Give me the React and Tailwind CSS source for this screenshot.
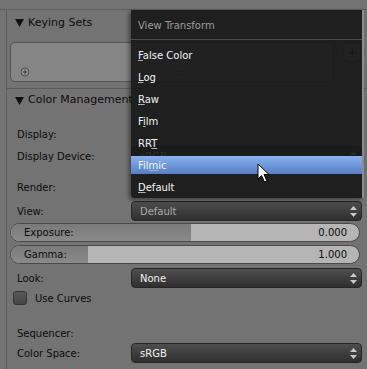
import React from 'react';

const font = { fontFamily: '"DejaVu Sans", "Liberation Sans", sans-serif' };

function Tri() {
  return (
    <svg width="9" height="8" viewBox="0 0 9 8" className="shrink-0">
      <path d="M0 0 H9 L4.5 8 Z" fill="#111" />
    </svg>
  );
}

function UpDown({ color = '#c8c8c8' }) {
  return (
    <svg width="7" height="11" viewBox="0 0 7 11" className="shrink-0">
      <path d="M3.5 0 L7 4 H0 Z" fill={color} />
      <path d="M0 7 H7 L3.5 11 Z" fill={color} />
    </svg>
  );
}

function Dropdown({ value, dim }) {
  return (
    <div className="flex-1 h-[20px] rounded-[4px] border border-[#262626] bg-gradient-to-b from-[#4e4e4e] to-[#2f2f2f] flex items-center justify-between pl-[8px] pr-[4px]">
      <span className={dim ? 'text-[#a9a9a9]' : 'text-[#f2f2f2]'}>{value}</span>
      <UpDown />
    </div>
  );
}

function Row({ label, children }) {
  return (
    <div className="flex items-center h-[20px] pr-[5px]">
      <div className="w-[124px] pl-[10px] shrink-0">{label}</div>
      {children}
    </div>
  );
}

function Slider({ label, value, fill }) {
  return (
    <div className="relative h-[19px] ml-[3px] mr-[7px] rounded-full border border-[#4a4a4a] bg-[#b5b5b5] overflow-hidden">
      <div
        className="absolute left-0 top-0 bottom-0 bg-gradient-to-b from-[#7a7a7a] to-[#8a8a8a]"
        style={{ width: fill }}
      />
      <div className="relative h-full flex items-center justify-between pl-[13px] pr-[12px]">
        <span>{label}</span>
        <span>{value}</span>
      </div>
    </div>
  );
}

function Item({ pre, u, post, active }) {
  return (
    <div className="h-[22px] py-[2px]">
      <div
        className={`h-[18px] flex items-center pl-[7px] ${
          active ? 'bg-gradient-to-b from-[#8ab1f0] to-[#5580c6]' : ''
        }`}
      >
        <span className="text-[#f4f4f4]">
          {pre}
          <span className="underline decoration-[#b0b0b0] underline-offset-[1px]">{u}</span>
          {post}
        </span>
      </div>
    </div>
  );
}

export default function App() {
  return (
    <div
      className="relative w-[367px] h-[369px] overflow-hidden bg-[#737373] text-[10px] text-[#0c0c0c]"
      style={font}
    >
      <div className="h-[10px] border-b border-[#5e5e5e]" />
      <div className="ml-[6px] border-l border-[#5a5a5a] h-[359px]">
        {/* Keying Sets */}
        <div className="h-[24px] pt-[2px] flex items-center gap-[4px] pl-[8px] text-[11px]">
          <Tri />
          <span>Keying Sets</span>
        </div>
        <div className="flex gap-[9px] mt-[8px] pl-[3px] pr-[5px]">
          <div className="relative w-[324px] h-[40px] rounded-[5px] border border-[#565656] bg-[#858585] flex items-end">
            <div className="h-[18px] flex items-center pl-[9px]">
              <svg width="10" height="10" viewBox="0 0 10 10">
                <circle cx="5" cy="5" r="4" fill="#9a9a9a" stroke="#4a4a4a" />
                <path d="M5 2.5 V7.5 M2.5 5 H7.5" stroke="#3a3a3a" strokeWidth="1" />
              </svg>
            </div>
            <div className="absolute left-[166px] top-[28px] w-[10px] h-[4px] border-y border-[#5a5a5a]" />
          </div>
          <div className="w-[18px] h-[20px] rounded-[4px] border border-[#555] bg-[#8a8a8a] flex items-center justify-center text-[14px] text-[#333]">
            +
          </div>
        </div>
        <div className="mt-[6px] border-t border-[#5c5c5c]" />

        {/* Color Management */}
        <div className="h-[22px] pt-[1px] flex items-center gap-[4px] pl-[8px] text-[11px]">
          <Tri />
          <span>Color Management</span>
        </div>
        <div className="mt-[13px]">
          <Row label="Display:" />
          <div className="mt-[2px]">
            <Row label="Display Device:">
              <Dropdown value="sRGB" />
            </Row>
          </div>
          <div className="mt-[11px]">
            <Row label="Render:" />
          </div>
          <div className="mt-[4px]">
            <Row label="View:">
              <Dropdown value="Default" dim />
            </Row>
          </div>
          <div className="mt-[2px]">
            <Slider label="Exposure:" value="0.000" fill="180px" />
          </div>
          <div className="mt-[3px]">
            <Slider label="Gamma:" value="1.000" fill="77px" />
          </div>
          <div className="mt-[4px]">
            <Row label="Look:">
              <Dropdown value="None" />
            </Row>
          </div>
          <div className="h-[20px] flex items-center gap-[8px] pl-[6px]">
            <div className="w-[14px] h-[14px] rounded-[3px] border border-[#353535] bg-gradient-to-b from-[#5a5a5a] to-[#454545]" />
            <span>Use Curves</span>
          </div>
          <div className="mt-[15px]">
            <Row label="Sequencer:" />
          </div>
          <Row label="Color Space:">
            <Dropdown value="sRGB" />
          </Row>
        </div>
      </div>

      {/* View Transform popup */}
      <div className="absolute left-[131px] top-[10px] w-[233px] h-[188px] border-r-[2px] border-r-[#8c8c8c] bg-[rgba(22,22,22,0.9)] shadow-[-2px_2px_4px_rgba(0,0,0,0.45)] rounded-bl-[3px]">
        <div className="h-[30px] pt-[2px] flex items-center pl-[7px] text-[#9c9c9c] border-b border-[#4c4c4c]">
          View Transform
        </div>
        <div className="pt-[4px]">
          <Item pre="" u="F" post="alse Color" />
          <Item pre="" u="L" post="og" />
          <Item pre="" u="R" post="aw" />
          <Item pre="F" u="i" post="lm" />
          <Item pre="RR" u="T" post="" />
          <Item pre="Fil" u="m" post="ic" active />
          <Item pre="" u="D" post="efault" />
        </div>
      </div>

      {/* cursor */}
      <svg className="absolute left-[257px] top-[163px]" width="14" height="21" viewBox="0 0 14 21">
        <path d="M1 1 V16 L4.5 12.5 L7.5 19 L10 18 L7 11.5 H12 Z" fill="#fff" stroke="#000" strokeWidth="1" strokeLinejoin="round" />
      </svg>
    </div>
  );
}
